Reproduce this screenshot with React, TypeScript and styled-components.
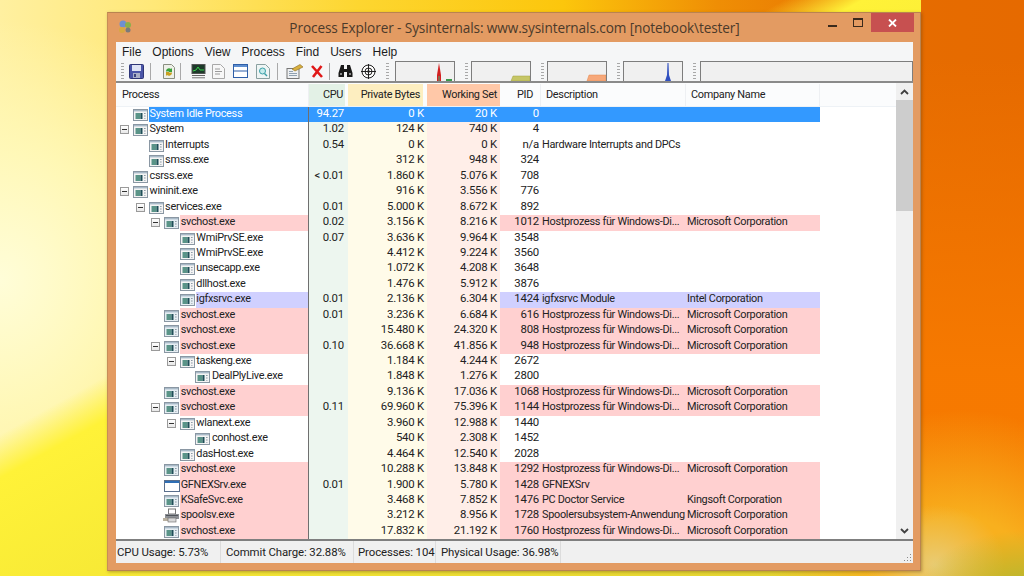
import React from 'react';
import styled, { createGlobalStyle } from 'styled-components';

const GlobalStyle = createGlobalStyle`
  html, body { margin: 0; padding: 0; height: 100%; overflow: hidden; }
  body { font-family: Roboto, "Liberation Sans", Arial, sans-serif; }
`;

const Desktop = styled.div`
  width: 1024px;
  height: 576px;
  box-sizing: border-box;
  padding: 12px 0 0 107px;
  background:
    radial-gradient(ellipse 110px 60px at 1030px 590px, rgba(176, 184, 48, 1) 0%, rgba(190, 185, 50, 0) 100%) no-repeat,
    radial-gradient(ellipse 70px 60px at 935px 565px, rgba(232, 205, 120, 0.95) 0%, rgba(240, 190, 90, 0) 100%) no-repeat,
    radial-gradient(ellipse 190px 180px at 960px 590px, rgba(248, 176, 30, 1) 40%, rgba(247, 128, 0, 0) 100%) no-repeat,
    linear-gradient(180deg, rgba(247, 120, 0, 0) 10%, rgba(247, 122, 0, 0.95) 65%) 921px 0 / 103px 100% no-repeat,
    linear-gradient(151deg, rgba(255, 242, 56, 0) 40%, #fff238 44%, #e0d030 100%) 0 0 / 921px 100% no-repeat,
    radial-gradient(ellipse 250px 260px at 0px 280px, #fffdd8 0%, rgba(255, 250, 190, 0.8) 50%, rgba(255, 240, 130, 0) 100%) no-repeat,
    linear-gradient(90deg, #fff0a0 0%, #ffe878 15%, #fdd630 35%, #fcc60c 55%, #ef8e05 70%, #e66c00 88%, #e66a00 100%);
`;

const Window = styled.div`
  width: 814px;
  height: 559px;
  box-sizing: border-box;
  display: flex;
  flex-direction: column;
  padding: 0 7px 7px 8px;
  background: #e39b62;
  border: 1px solid #b98350;
  border-left-color: #c78d58;
  box-shadow: 1px 1px 3px rgba(90, 60, 20, 0.4);
`;

const TitleBar = styled.div`
  position: relative;
  height: 29px;
  flex: none;
  display: flex;
  align-items: center;
  justify-content: center;
  font-family: "Open Sans", "Noto Sans", sans-serif;
  font-size: 13.6px;
  letter-spacing: -0.1px;
  color: #4b3a2a;
`;

const AppIcon = styled.svg`
  position: absolute;
  left: 1px;
  top: 6px;
`;

const Controls = styled.div`
  position: absolute;
  right: -1px;
  top: 0;
  display: flex;
  align-items: flex-start;
`;

const ControlButton = styled.div<{ $close?: boolean }>`
  width: ${p => (p.$close ? '43px' : '26px')};
  height: 19px;
  display: flex;
  align-items: center;
  justify-content: center;
  background: ${p => (p.$close ? '#c75050' : 'transparent')};
`;

const MenuBar = styled.div`
  height: 18px;
  flex: none;
  display: flex;
  align-items: center;
  gap: 11px;
  padding: 1px 0 0 6px;
  background: #f5f6f7;
  font-family: "Liberation Sans", Arial, sans-serif;
  font-size: 12px;
  color: #1c1c1c;
`;

const Toolbar = styled.div`
  height: 22px;
  flex: none;
  display: flex;
  align-items: center;
  padding-left: 5px;
  background: #f5f6f7;
  border-bottom: 2px solid #8a8a8a;
  box-sizing: border-box;
`;

const Gripper = styled.div`
  width: 3px;
  height: 16px;
  flex: none;
  background: repeating-linear-gradient(to bottom, #a8a8a8 0 1px, transparent 1px 3px);
`;

const ToolIcon = styled.svg<{ $gap?: number }>`
  flex: none;
  margin-left: ${p => p.$gap ?? 0}px;
`;

const ToolSep = styled.div<{ $gap: number }>`
  width: 1px;
  height: 17px;
  flex: none;
  margin-left: ${p => p.$gap}px;
  background: #a9a9a9;
`;

const GraphBox = styled.div<{ $w: number; $gap: number }>`
  width: ${p => p.$w}px;
  height: 20px;
  flex: none;
  box-sizing: border-box;
  margin-left: ${p => p.$gap}px;
  background: #f0f0f0;
  border: 1px solid #7d7d7d;
  border-bottom-width: 0;
  overflow: hidden;
`;

const GripWrap = styled.div<{ $gap: number }>`
  margin-left: ${p => p.$gap}px;
  display: flex;
`;

const ListArea = styled.div`
  flex: 1;
  min-height: 0;
  display: flex;
  background: #fff;
  border-bottom: 2px solid #7f7f7f;
  overflow: hidden;
`;

const ListBody = styled.div`
  flex: 1;
  min-width: 0;
  display: flex;
  flex-direction: column;
  font-size: 10.9px;
  letter-spacing: -0.3px;
  color: #222;
`;

const COLS = '193px 39px 79px 73px 41px 145px 134px';

const HeaderRow = styled.div`
  height: 24px;
  flex: none;
  display: grid;
  grid-template-columns: ${COLS} 1fr;
  background: #fbfcfd;
  border-bottom: 1px solid #eef2f6;
  box-sizing: border-box;
  padding-top: 1px;
`;

const HeaderCell = styled.div<{ $bg?: string; $right?: boolean; $end?: number; $pad?: number }>`
  display: flex;
  align-items: center;
  justify-content: ${p => (p.$right ? 'flex-end' : 'flex-start')};
  padding: 0 ${p => (p.$right ? p.$pad ?? 3 : 0)}px 1px ${p => (p.$right ? 0 : p.$pad ?? 5)}px;
  margin-right: ${p => p.$end ?? 0}px;
  background: ${p => p.$bg ?? 'transparent'};
  border-right: ${p => (p.$bg ? '0' : '1px solid #eef0f3')};
`;

const Row = styled.div`
  height: 15.44px;
  flex: none;
  display: grid;
  grid-template-columns: ${COLS};
  line-height: 13px;
`;

const TreeCell = styled.div<{ $level: number }>`
  display: flex;
  align-items: center;
  min-width: 0;
  height: 100%;
  padding-left: ${p => p.$level * 15.6 + 33}px;
  position: relative;
  border-right: 1px solid #6f6f6f;
  box-sizing: border-box;
`;

const IconSlot = styled.div`
  position: relative;
  width: 0;
  height: 100%;
`;

const Expander = styled.div`
  position: absolute;
  left: -29px;
  width: 9px;
  height: 9px;
  top: 3px;
  box-sizing: border-box;
  border: 1px solid #9a9a9a;
  background: linear-gradient(#fff, #e8e8e8);
  display: flex;
  align-items: center;
  justify-content: center;
  &::after {
    content: '';
    width: 5px;
    height: 1px;
    background: #333;
  }
`;

const ProcName = styled.div<{ $bg: string; $color: string }>`
  flex: 1;
  height: 100%;
  min-width: 0;
  white-space: nowrap;
  padding-left: 0.5px;
  background: ${p => p.$bg};
  color: ${p => p.$color};
`;

const NumCell = styled.div<{ $bg: string; $color?: string; $pad?: number }>`
  text-align: right;
  padding-right: ${p => p.$pad ?? 3}px;
  font-size: 11.4px;
  letter-spacing: -0.22px;
  white-space: nowrap;
  background: ${p => p.$bg};
  color: ${p => p.$color ?? 'inherit'};
`;

const TextCell = styled.div<{ $bg: string; $color?: string }>`
  padding-left: 1px;
  white-space: nowrap;
  overflow: hidden;
  background: ${p => p.$bg};
  color: ${p => p.$color ?? 'inherit'};
`;

const Filler = styled.div`
  flex: 1;
`;

const Scrollbar = styled.div`
  width: 17px;
  flex: none;
  display: flex;
  flex-direction: column;
  background: #f0f0f0;
`;

const ScrollButton = styled.div`
  height: 17px;
  flex: none;
  display: flex;
  align-items: center;
  justify-content: center;
`;

const ScrollThumb = styled.div`
  height: 111px;
  flex: none;
  background: #cdcdcd;
`;

const ScrollTrack = styled.div`
  flex: 1;
`;

const StatusBar = styled.div`
  position: relative;
  height: 22px;
  flex: none;
  display: flex;
  align-items: center;
  background: #f0f0f0;
  font-size: 11.4px;
  letter-spacing: -0.1px;
  color: #222;
`;

const StatusItem = styled.div<{ $w: number; $pad: number }>`
  width: ${p => p.$w}px;
  height: 100%;
  flex: none;
  box-sizing: border-box;
  display: flex;
  align-items: center;
  padding-left: ${p => p.$pad}px;
  border-right: 1px solid #dcdcdc;
  white-space: nowrap;
`;

const SizeGrip = styled.svg`
  position: absolute;
  right: 1px;
  bottom: 1px;
`;

type RowKind = 'plain' | 'selected' | 'service' | 'immersive';
type IconKind = 'app' | 'service' | 'window' | 'printer';

interface ProcessRow {
  name: string;
  level: number;
  open?: boolean;
  cpu?: string;
  priv: string;
  ws: string;
  pid: string;
  desc?: string;
  company?: string;
  kind?: RowKind;
  icon?: IconKind;
}

const HOST = 'Hostprozess für Windows-Di...';
const MS = 'Microsoft Corporation';

const svc = (name: string, open: boolean, cpu: string, priv: string, ws: string, pid: string): ProcessRow => ({
  name, level: 2, open, cpu, priv, ws, pid, desc: HOST, company: MS, kind: 'service', icon: 'service',
});

const rows: ProcessRow[] = [
  { name: 'System Idle Process', level: 0, cpu: '94.27', priv: '0 K', ws: '20 K', pid: '0', kind: 'selected' },
  { name: 'System', level: 0, open: true, cpu: '1.02', priv: '124 K', ws: '740 K', pid: '4' },
  { name: 'Interrupts', level: 1, cpu: '0.54', priv: '0 K', ws: '0 K', pid: 'n/a', desc: 'Hardware Interrupts and DPCs' },
  { name: 'smss.exe', level: 1, priv: '312 K', ws: '948 K', pid: '324' },
  { name: 'csrss.exe', level: 0, cpu: '< 0.01', priv: '1.860 K', ws: '5.076 K', pid: '708' },
  { name: 'wininit.exe', level: 0, open: true, priv: '916 K', ws: '3.556 K', pid: '776' },
  { name: 'services.exe', level: 1, open: true, cpu: '0.01', priv: '5.000 K', ws: '8.672 K', pid: '892' },
  svc('svchost.exe', true, '0.02', '3.156 K', '8.216 K', '1012'),
  { name: 'WmiPrvSE.exe', level: 3, cpu: '0.07', priv: '3.636 K', ws: '9.964 K', pid: '3548' },
  { name: 'WmiPrvSE.exe', level: 3, priv: '4.412 K', ws: '9.224 K', pid: '3560' },
  { name: 'unsecapp.exe', level: 3, priv: '1.072 K', ws: '4.208 K', pid: '3648' },
  { name: 'dllhost.exe', level: 3, priv: '1.476 K', ws: '5.912 K', pid: '3876' },
  { name: 'igfxsrvc.exe', level: 3, cpu: '0.01', priv: '2.136 K', ws: '6.304 K', pid: '1424', desc: 'igfxsrvc Module', company: 'Intel Corporation', kind: 'immersive', icon: 'service' },
  svc('svchost.exe', false, '0.01', '3.236 K', '6.684 K', '616'),
  svc('svchost.exe', false, '', '15.480 K', '24.320 K', '808'),
  svc('svchost.exe', true, '0.10', '36.668 K', '41.856 K', '948'),
  { name: 'taskeng.exe', level: 3, open: true, priv: '1.184 K', ws: '4.244 K', pid: '2672' },
  { name: 'DealPlyLive.exe', level: 4, priv: '1.848 K', ws: '1.276 K', pid: '2800' },
  svc('svchost.exe', false, '', '9.136 K', '17.036 K', '1068'),
  svc('svchost.exe', true, '0.11', '69.960 K', '75.396 K', '1144'),
  { name: 'wlanext.exe', level: 3, open: true, priv: '3.960 K', ws: '12.988 K', pid: '1440' },
  { name: 'conhost.exe', level: 4, priv: '540 K', ws: '2.308 K', pid: '1452' },
  { name: 'dasHost.exe', level: 3, priv: '4.464 K', ws: '12.540 K', pid: '2028' },
  svc('svchost.exe', false, '', '10.288 K', '13.848 K', '1292'),
  { name: 'GFNEXSrv.exe', level: 2, cpu: '0.01', priv: '1.900 K', ws: '5.780 K', pid: '1428', desc: 'GFNEXSrv', kind: 'service', icon: 'window' },
  { name: 'KSafeSvc.exe', level: 2, priv: '3.468 K', ws: '7.852 K', pid: '1476', desc: 'PC Doctor Service', company: 'Kingsoft Corporation', kind: 'service', icon: 'service' },
  { name: 'spoolsv.exe', level: 2, priv: '3.212 K', ws: '8.956 K', pid: '1728', desc: 'Spoolersubsystem-Anwendung', company: MS, kind: 'service', icon: 'printer' },
  svc('svchost.exe', false, '', '17.832 K', '21.192 K', '1760'),
];

const rowBg: Record<RowKind, string> = {
  plain: 'transparent',
  selected: '#3399ff',
  service: '#ffd0d0',
  immersive: '#d0d0ff',
};

const CPU_BG = '#edf6ef';
const PRIV_BG = '#fffbe9';
const WS_BG = '#ffeee8';
const BLUE = '#3399ff';

const TreeIcon = styled.svg<{ $left: number; $top: number }>`
  position: absolute;
  left: ${p => p.$left}px;
  top: ${p => p.$top}px;
`;

// the little exe icon: a window with a teal block and a dotted side
const ProcIcon: React.FC<{ kind: IconKind }> = ({ kind }) => {
  if (kind === 'window') {
    return (
      <TreeIcon width="16" height="15" viewBox="0 0 16 15" $left={-16} $top={0}>
        <rect x="0.5" y="2.5" width="15" height="11" fill="#fff" stroke="#5a6f8c" />
        <rect x="1" y="3" width="14" height="2" fill="#2f6fb5" />
      </TreeIcon>
    );
  }
  if (kind === 'printer') {
    return (
      <TreeIcon width="17" height="15" viewBox="0 0 17 15" $left={-17} $top={0}>
        <rect x="5.5" y="1" width="7" height="5" fill="#fff" stroke="#777" />
        <rect x="2" y="6" width="14" height="5" fill="#8c8f94" />
        <rect x="0" y="10" width="6" height="3" fill="#b9b0a0" />
        <rect x="5" y="10" width="8" height="4" fill="#d8d8d8" stroke="#666" strokeWidth="0.6" />
        <rect x="3" y="7" width="12" height="1" fill="#50545a" />
      </TreeIcon>
    );
  }
  return (
    <TreeIcon width="15" height="14" viewBox="0 0 15 14" $left={-16} $top={1}>
      <rect x="0.5" y="1.5" width="14" height="11" fill={kind === 'service' ? '#e6eef3' : '#f4f4f4'} stroke="#8a97a3" />
      <rect x="1" y="2" width="13" height="1.4" fill="#a9bac8" />
      <rect x="2.5" y="5" width="5" height="6" fill="#5a9488" />
      <rect x="7.5" y="5" width="2" height="6" fill="#1f4f58" />
      <rect x="11" y="5" width="1.6" height="1" fill="#8d9aa6" />
      <rect x="11" y="7.5" width="1.6" height="1" fill="#8d9aa6" />
      <rect x="11" y="10" width="1.6" height="1" fill="#b5bec6" />
    </TreeIcon>
  );
};

const ProcessRowView: React.FC<{ row: ProcessRow }> = ({ row }) => {
  const kind = row.kind ?? 'plain';
  const selected = kind === 'selected';
  const bg = rowBg[kind];
  const fg = selected ? '#fff' : undefined;
  return (
    <Row>
      <TreeCell $level={row.level}>
        <IconSlot>
          <ProcIcon kind={row.icon ?? 'app'} />
          {row.open && <Expander />}
        </IconSlot>
        <ProcName $bg={bg} $color={fg ?? '#222'}>{row.name}</ProcName>
      </TreeCell>
      <NumCell $bg={selected ? BLUE : CPU_BG} $color={fg} $pad={4}>{row.cpu}</NumCell>
      <NumCell $bg={selected ? BLUE : PRIV_BG} $color={fg}>{row.priv}</NumCell>
      <NumCell $bg={selected ? BLUE : WS_BG} $color={fg}>{row.ws}</NumCell>
      <NumCell $bg={bg} $color={fg} $pad={2}>{row.pid}</NumCell>
      <TextCell $bg={bg}>{row.desc}</TextCell>
      <TextCell $bg={bg}>{row.company}</TextCell>
    </Row>
  );
};

const SaveIcon = () => (
  <ToolIcon width="15" height="15" viewBox="0 0 15 15">
    <rect x="0.5" y="0.5" width="14" height="14" rx="1" fill="#4a55a8" stroke="#2f3677" />
    <rect x="3" y="1" width="9" height="6" fill="#dfe4f5" />
    <rect x="4" y="9" width="7" height="5" fill="#aab0c8" />
    <rect x="5" y="10" width="2" height="3" fill="#3b437f" />
  </ToolIcon>
);

const RefreshIcon = () => (
  <ToolIcon width="14" height="15" viewBox="0 0 14 15" $gap={11}>
    <path d="M1.5 .5h8l3 3v11h-11z" fill="#eef0e8" stroke="#8a8f80" />
    <path d="M4 7a3 3 0 0 1 5-2l1-1v4H6l1-1a1.6 1.6 0 0 0-2 1z" fill="#3aa23a" />
    <path d="M10 9a3 3 0 0 1-5 2l-1 1V8h4l-1 1a1.6 1.6 0 0 0 2-1z" fill="#c8a020" />
  </ToolIcon>
);

const SysInfoIcon = () => (
  <ToolIcon width="15" height="15" viewBox="0 0 15 15" $gap={10}>
    <rect x="1" y="0.5" width="13" height="9" fill="#1d3a2a" stroke="#555" />
    <path d="M2 7 5 6 7 3 9 6h4" fill="none" stroke="#39d04a" />
    <rect x="1" y="11" width="13" height="1" fill="#666" />
    <rect x="1" y="13" width="13" height="1.4" fill="#999" />
  </ToolIcon>
);

const DocIcon = () => (
  <ToolIcon width="13" height="15" viewBox="0 0 13 15" $gap={6}>
    <path d="M.5.5h8l4 4v10H.5z" fill="#f7f7f7" stroke="#a8a8a8" />
    <path d="M3 5h5M3 7.5h7M3 10h5" stroke="#9a9a9a" fill="none" />
  </ToolIcon>
);

const PaneIcon = () => (
  <ToolIcon width="15" height="14" viewBox="0 0 15 14" $gap={8}>
    <rect x="0.5" y="0.5" width="14" height="13" fill="#fff" stroke="#2f5fa8" />
    <rect x="1" y="1" width="13" height="2" fill="#5f8fd0" />
    <rect x="1" y="6.5" width="13" height="1" fill="#2f5fa8" />
  </ToolIcon>
);

const FindDocIcon = () => (
  <ToolIcon width="14" height="15" viewBox="0 0 14 15" $gap={8}>
    <path d="M.5.5h9l4 4v10H.5z" fill="#eef5f5" stroke="#8aa0a0" />
    <circle cx="6.5" cy="7" r="3" fill="#c5ecec" stroke="#3aa0a8" />
    <path d="M8.5 9.5l2.5 2.5" stroke="#3aa0a8" strokeWidth="1.4" />
  </ToolIcon>
);

const PropsIcon = () => (
  <ToolIcon width="18" height="15" viewBox="0 0 18 15" $gap={8}>
    <rect x="1" y="4.5" width="12" height="10" fill="#eef0f2" stroke="#777" />
    <path d="M3 7.5h4M3 9.5h8M3 11.5h8" stroke="#8fa0b0" />
    <path d="M6 5 14 .5 17 3 9 7z" fill="#d8b040" stroke="#8a6a20" strokeWidth="0.6" />
  </ToolIcon>
);

const KillIcon = () => (
  <ToolIcon width="12" height="13" viewBox="0 0 12 13" $gap={7}>
    <path d="M1 1 11 12M10.5 1 2 12" stroke="#e01818" strokeWidth="2.6" fill="none" />
  </ToolIcon>
);

const BinocularsIcon = () => (
  <ToolIcon width="15" height="14" viewBox="0 0 15 14" $gap={8}>
    <path d="M3 1h3v4h3V1h3l2.5 8v4H9V8H6v5H.5V9z" fill="#1a1a1a" />
    <rect x="2" y="9" width="2" height="2" fill="#8a8a8a" />
    <rect x="11" y="9" width="2" height="2" fill="#8a8a8a" />
  </ToolIcon>
);

const TargetIcon = () => (
  <ToolIcon width="15" height="15" viewBox="0 0 15 15" $gap={8}>
    <circle cx="7.5" cy="7.5" r="6.5" fill="#fff" stroke="#222" />
    <circle cx="7.5" cy="7.5" r="3.5" fill="none" stroke="#222" />
    <path d="M7.5 0v15M0 7.5h15" stroke="#222" />
    <circle cx="7.5" cy="7.5" r="1.3" fill="#222" />
  </ToolIcon>
);

const Graph: React.FC<{ w: number; gap: number; children?: React.ReactNode }> = ({ w, gap, children }) => (
  <GraphBox $w={w} $gap={gap}>
    <svg width={w - 2} height="19" viewBox={`0 0 ${w - 2} 19`} style={{ display: 'block' }}>{children}</svg>
  </GraphBox>
);

const App: React.FC = () => (
  <>
    <GlobalStyle />
    <Desktop>
      <Window>
        <TitleBar>
          <AppIcon width="16" height="16" viewBox="0 0 16 16">
            <circle cx="6" cy="5" r="3.5" fill="#6f8fd0" />
            <circle cx="11" cy="6" r="3" fill="#8ab04a" />
            <circle cx="5" cy="11" r="3" fill="#d8a840" />
            <circle cx="11" cy="11" r="2.5" fill="#7a7a7a" />
          </AppIcon>
          Process Explorer - Sysinternals: www.sysinternals.com [notebook\tester]
          <Controls>
            <ControlButton>
              <svg width="9" height="3" viewBox="0 0 9 3" style={{ marginTop: 7 }}><rect width="9" height="2" fill="#3a2a1c" /></svg>
            </ControlButton>
            <ControlButton>
              <svg width="10" height="9" viewBox="0 0 10 9"><rect x="0.5" y="0.5" width="9" height="8" fill="none" stroke="#3a2a1c" /><rect x="0" y="0" width="10" height="2" fill="#3a2a1c" /></svg>
            </ControlButton>
            <ControlButton $close>
              <svg width="9" height="8" viewBox="0 0 9 8"><path d="M1 .5 8 7.5M8 .5 1 7.5" stroke="#fff" strokeWidth="1.8" /></svg>
            </ControlButton>
          </Controls>
        </TitleBar>
        <MenuBar>
          <span>File</span>
          <span>Options</span>
          <span>View</span>
          <span>Process</span>
          <span>Find</span>
          <span>Users</span>
          <span>Help</span>
        </MenuBar>
        <Toolbar>
          <Gripper />
          <GripWrap $gap={5}><SaveIcon /></GripWrap>
          <ToolSep $gap={6} />
          <RefreshIcon />
          <ToolSep $gap={4} />
          <SysInfoIcon />
          <DocIcon />
          <PaneIcon />
          <FindDocIcon />
          <ToolSep $gap={7} />
          <PropsIcon />
          <KillIcon />
          <ToolSep $gap={6} />
          <BinocularsIcon />
          <TargetIcon />
          <GripWrap $gap={10}><Gripper /></GripWrap>
          <Graph w={60} gap={6}>
            <path d="M41 19V13L43 1 45 13V19z" fill="#d32020" />
            <path d="M42 19V14h2v5z" fill="#8a6a50" />
            <rect x="50" y="17" width="6" height="2" fill="#3a9a4a" />
          </Graph>
          <GripWrap $gap={10}><Gripper /></GripWrap>
          <Graph w={60} gap={3}>
            <path d="M39 19 41 14H58V19z" fill="#c6c666" stroke="#a0a040" strokeWidth="0.5" />
          </Graph>
          <GripWrap $gap={10}><Gripper /></GripWrap>
          <Graph w={60} gap={3}>
            <path d="M39 19 41 13H58V19z" fill="#f7a87a" stroke="#e08850" strokeWidth="0.5" />
          </Graph>
          <GripWrap $gap={10}><Gripper /></GripWrap>
          <Graph w={60} gap={3}>
            <path d="M41 19 43 13 43.5 1 44.5 1 45 13 47 19z" fill="#3050c0" />
          </Graph>
          <GripWrap $gap={10}><Gripper /></GripWrap>
          <Graph w={213} gap={4} />
        </Toolbar>
        <ListArea>
          <ListBody>
            <HeaderRow>
              <HeaderCell $pad={6}>Process</HeaderCell>
              <HeaderCell $bg="#e3f1e6" $right $end={3} $pad={2}>CPU</HeaderCell>
              <HeaderCell $bg="#fdeec0" $right $end={4}>Private Bytes</HeaderCell>
              <HeaderCell $bg="#ffc8a8" $right>Working Set</HeaderCell>
              <HeaderCell $right $pad={7}>PID</HeaderCell>
              <HeaderCell>Description</HeaderCell>
              <HeaderCell>Company Name</HeaderCell>
            </HeaderRow>
            {rows.map((row, i) => <ProcessRowView key={i} row={row} />)}
            <Filler />
          </ListBody>
          <Scrollbar>
            <ScrollButton>
              <svg width="9" height="6" viewBox="0 0 9 6"><path d="M1 5 4.5 1.5 8 5" fill="none" stroke="#404040" strokeWidth="1.8" /></svg>
            </ScrollButton>
            <ScrollThumb />
            <ScrollTrack />
            <ScrollButton>
              <svg width="9" height="6" viewBox="0 0 9 6"><path d="M1 1 4.5 4.5 8 1" fill="none" stroke="#404040" strokeWidth="1.8" /></svg>
            </ScrollButton>
          </Scrollbar>
        </ListArea>
        <StatusBar>
          <StatusItem $w={105} $pad={1}>CPU Usage: 5.73%</StatusItem>
          <StatusItem $w={133} $pad={5}>Commit Charge: 32.88%</StatusItem>
          <StatusItem $w={82} $pad={4}>Processes: 104</StatusItem>
          <StatusItem $w={125} $pad={5}>Physical Usage: 36.98%</StatusItem>
          <SizeGrip width="9" height="9" viewBox="0 0 9 9">
            <path d="M7 1h1v1H7zM4 4h1v1H4zM7 4h1v1H7zM1 7h1v1H1zM4 7h1v1H4zM7 7h1v1H7z" fill="#8a8a8a" />
          </SizeGrip>
        </StatusBar>
      </Window>
    </Desktop>
  </>
);

export default App;
